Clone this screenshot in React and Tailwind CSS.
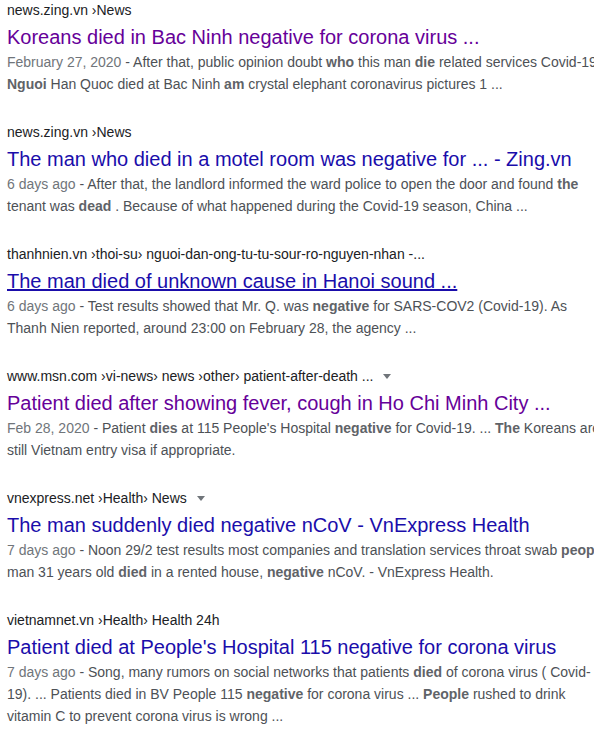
import React from 'react'

const results = [
  {
    site: "news.zing.vn",
    crumbs: " ›News",
    arrow: false,
    title: "Koreans died in Bac Ninh negative for corona virus ...",
    visited: true,
    date: "February 27, 2020",
    lines: [
      [" - After that, public opinion doubt ", ["who"], " this man ", ["die"], " related services Covid-19"],
      [["Nguoi"], " Han Quoc died at Bac Ninh ", ["am"], " crystal elephant coronavirus pictures 1 ..."],
    ],
  },
  {
    site: "news.zing.vn",
    crumbs: " ›News",
    arrow: false,
    title: "The man who died in a motel room was negative for ... - Zing.vn",
    visited: false,
    date: "6 days ago",
    lines: [
      [" - After that, the landlord informed the ward police to open the door and found ", ["the"]],
      ["tenant was ", ["dead"], " . Because of what happened during the Covid-19 season, China ..."],
    ],
  },
  {
    site: "thanhnien.vn",
    crumbs: " ›thoi-su› nguoi-dan-ong-tu-tu-sour-ro-nguyen-nhan -...",
    arrow: false,
    title: "The man died of unknown cause in Hanoi sound ...",
    visited: false,
    hover: true,
    date: "6 days ago",
    lines: [
      [" - Test results showed that Mr. Q. was ", ["negative"], " for SARS-COV2 (Covid-19). As"],
      ["Thanh Nien reported, around 23:00 on February 28, the agency ..."],
    ],
  },
  {
    site: "www.msn.com",
    crumbs: " ›vi-news› news ›other› patient-after-death ...",
    arrow: true,
    title: "Patient died after showing fever, cough in Ho Chi Minh City ...",
    visited: true,
    date: "Feb 28, 2020",
    lines: [
      [" - Patient ", ["dies"], " at 115 People's Hospital ", ["negative"], " for Covid-19. ... ", ["The"], " Koreans are"],
      ["still Vietnam entry visa if appropriate."],
    ],
  },
  {
    site: "vnexpress.net",
    crumbs: " ›Health› News",
    arrow: true,
    title: "The man suddenly died negative nCoV - VnExpress Health",
    visited: false,
    date: "7 days ago",
    lines: [
      [" - Noon 29/2 test results most companies and translation services throat swab ", ["people"]],
      ["man 31 years old ", ["died"], " in a rented house, ", ["negative"], " nCoV. - VnExpress Health."],
    ],
  },
  {
    site: "vietnamnet.vn",
    crumbs: " ›Health› Health 24h",
    arrow: false,
    title: "Patient died at People's Hospital 115 negative for corona virus",
    visited: false,
    date: "7 days ago",
    lines: [
      [" - Song, many rumors on social networks that patients ", ["died"], " of corona virus ( Covid-"],
      ["19). ... Patients died in BV People 115 ", ["negative"], " for corona virus ... ", ["People"], " rushed to drink"],
      ["vitamin C to prevent corona virus is wrong ..."],
    ],
  },
]

const Line = ({ parts }) => (
  <>
    {parts.map((p, i) =>
      Array.isArray(p)
        ? <b key={i} className='font-bold text-[#5f6368]'>{p[0]}</b>
        : <span key={i}>{p}</span>
    )}
  </>
)

const Result = ({ r }) => (
  <div className='mb-[27px]'>
    <div className='h-[20px] leading-[20px] text-[14px] text-[#202124] whitespace-nowrap flex items-center'>
      <span>{r.site}<span className='text-[#202124]'>{r.crumbs}</span></span>
      {r.arrow && (
        <svg width="8" height="5" viewBox="0 0 8 5" className='ml-[10px]'>
          <path d="M0 0 L8 0 L4 5 Z" fill="#70757a" />
        </svg>
      )}
    </div>
    <div className={`mt-[4px] leading-[26px] text-[20px] whitespace-nowrap ${r.visited ? 'text-[#660099]' : 'text-[#1a0dab]'} ${r.hover ? 'underline' : ''}`}>
      {r.title}
    </div>
    <div className='mt-[1px] text-[14px] leading-[22px] text-[#4d5156]'>
      {r.lines.map((ln, i) => (
        <div key={i} className='whitespace-nowrap'>
          {i === 0 && <span className='text-[#70757a]'>{r.date}</span>}
          <Line parts={ln} />
        </div>
      ))}
    </div>
  </div>
)

const App = () => {
  return (
    <div className='w-[594px] h-[733px] overflow-hidden bg-white' style={{ fontFamily: 'Arial, "Liberation Sans", sans-serif' }}>
      <div className='pl-[7px] w-[620px]'>
        {results.map((r, i) => <Result key={i} r={r} />)}
      </div>
    </div>
  )
}

export default App
